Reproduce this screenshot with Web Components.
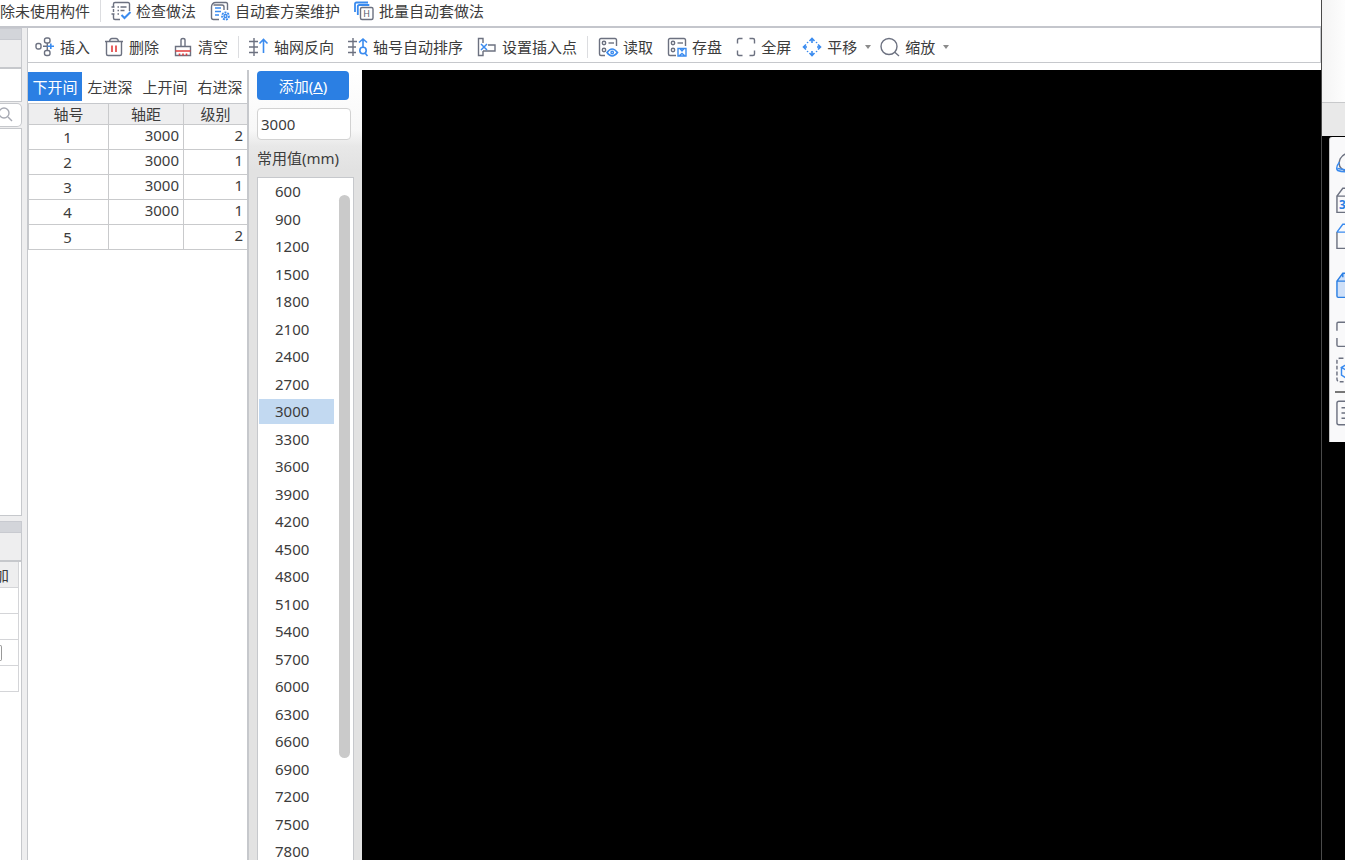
<!DOCTYPE html>
<html lang="zh-CN">
<head>
<meta charset="utf-8">
<title>轴网定义</title>
<style>
  html, body { margin: 0; height: 100%; overflow: hidden; }
  body {
    font: 15px/20px "Noto Sans", "Noto Sans CJK SC", sans-serif;
    color: #3c3c3c;
    background: #fff;
    --blue: #2b7fe3;
    --line: #c6c8cc;
    --chrome: #eeeeef;
  }
</style>
</head>
<body>
<app-shell>
  <tool-bar slot="ribbon" class="ribbon" label="构件工具">
    <tool-button>删除未使用构件</tool-button>
    <tool-separator></tool-separator>
    <tool-button icon="check">检查做法</tool-button>
    <tool-button icon="scheme">自动套方案维护</tool-button>
    <tool-button icon="batch">批量自动套做法</tool-button>
  </tool-bar>
  <side-dock slot="dock"></side-dock>
  <tool-bar slot="tools" label="轴网工具">
    <tool-button icon="insert">插入</tool-button>
    <tool-button icon="delete">删除</tool-button>
    <tool-button icon="clear">清空</tool-button>
    <tool-separator></tool-separator>
    <tool-button icon="reverse">轴网反向</tool-button>
    <tool-button icon="sort">轴号自动排序</tool-button>
    <tool-button icon="origin">设置插入点</tool-button>
    <tool-separator></tool-separator>
    <tool-button icon="read">读取</tool-button>
    <tool-button icon="save">存盘</tool-button>
    <tool-button icon="full">全屏</tool-button>
    <tool-button icon="pan" menu>平移</tool-button>
    <tool-button icon="zoom" menu>缩放</tool-button>
  </tool-bar>
  <axis-table slot="axes"></axis-table>
  <spacing-panel slot="spacing"></spacing-panel>
  <view-palette slot="palette"></view-palette>
</app-shell>

<script>
const ICONS = {
  insert: '<rect x="1" y="6.500" width="5" height="5.500" rx="2"/><rect x="9.500" y="1" width="5.500" height="5" rx="2"/><rect x="9.500" y="13.500" width="5.500" height="5" rx="2"/><path d="M8 9.300h4M12.300 6v7.500"/><path class="b" stroke-width="1.600" d="M12.500 9.300h6.500M15.800 6.500V12"/>',
  delete: '<path d="M1 4.500h18M5.500 4.500Q6 1.500 8 1.500h4q2 0 2.500 3M2.500 4.500V17q0 1.500 1.500 1.500h12q1.500 0 1.500-1.500V4.500"/><path class="r" d="M8 8.500v6.500M12 8.500v6.500"/>',
  clear: '<path d="M8 9.500V3q0-1.500 2-1.500t2 1.500v6.500M2.500 18.500V9.500h15v9z"/><path class="r" d="M2.500 14h15M6.500 16.500v2M10 16.500v2M13.500 16.500v2"/>',
  reverse: '<path d="M5 1v18M0 4.500h9M0 10h9M0 15.500h9"/><path class="b" stroke-width="1.600" d="M14.500 16V2.500M10.500 6.500l4-4 4 4"/>',
  sort: '<path d="M5 1v18M0 4.500h9M0 10h8M0 15.500h8"/><path class="b" stroke-width="1.600" d="M15 10V2M11 5.500L15 2l4 3.500"/><circle class="b" stroke-width="1.600" cx="15" cy="13.500" r="3.200"/><path class="b" stroke-width="1.600" d="M17 16l2.500 3"/>',
  origin: '<path d="M6 6V1.500H1.500v17H6V14M11 8h7v6H6"/><path class="b" stroke-width="1.500" d="M4 7l6 6M10 7l-6 6"/>',
  read: '<path d="M18.500 9V3q0-1.500-1.500-1.500H3Q1.500 1.500 1.500 3v14q0 1.500 1.500 1.500h4"/><circle cx="6" cy="6" r="1.700"/><circle cx="6" cy="13" r="1.700"/><path d="M10.500 6h5.500"/><path class="b" stroke-width="1.600" d="M9 15.500q5-7 10.500 0q-5.500 7-10.500 0z"/><circle class="b" cx="14.200" cy="15.500" r="1.200"/>',
  save: '<path d="M18.500 9V3q0-1.500-1.500-1.500H3Q1.500 1.500 1.500 3v14q0 1.500 1.500 1.500h6"/><circle cx="6" cy="6" r="1.700"/><circle cx="6" cy="13" r="1.700"/><path d="M10.500 6h5.500"/><path class="b" stroke-width="1.400" d="M11 11.500h8v7.500h-8zM13 11.500l2 2.500 2-2.500M12.500 18.500l2.500-2 2.500 2"/>',
  full: '<path d="M1.500 6.500V3q0-1.500 1.500-1.500h3.500M13.500 1.500H17q1.500 0 1.500 1.500v3.500M18.500 13.500V17q0 1.500-1.500 1.500h-3.500M6.500 18.500H3q-1.500 0-1.500-1.500v-3.500"/>',
  pan: '<path class="b" stroke-width="1.600" d="M7.500 4L10 1.500 12.500 4M7.500 16l2.500 2.500 2.500-2.500M4 7.500L1.500 10 4 12.500M16 7.500l2.500 2.500-2.500 2.500M10 2v4M10 14v4M2 10h3M15 10h3"/><path class="b" d="M5.500 5.500h.1M14.500 5.500h.1M5.500 14.500h.1M14.500 14.500h.1" stroke-linecap="round" stroke-width="1.600"/>',
  zoom: '<circle cx="9" cy="9.500" r="8"/><path d="M14.500 15L19 19"/>',
  check: '<path d="M18.500 10V3q0-1.500-1.500-1.500H4Q2.500 1.500 2.500 3v3M2.500 8v3M2.500 13v4q0 1.500 1.500 1.500h5M0.500 6h3M0.500 13h3M6.500 6h1.500M9.500 6h6M6.500 9.500h1.500M9.500 9.500h4M6.500 13h1.500"/><path class="b" stroke-width="2" d="M10.500 14l3 3 6-6"/>',
  scheme: '<path d="M17.500 9V3q0-1.500-1.500-1.500H6M3.500 4H12q2 0 2 2v3M1.500 6v10.500q0 2 2 2H9M1.500 6q0-4.500 4.500-4.500"/><path class="b" stroke-width="1.600" d="M5 7h6M5 10.500h6M5 14h4"/><circle class="b" cx="15.500" cy="15" r="3.500" stroke-dasharray="2 1" stroke-width="1.800"/><circle class="b" cx="15.500" cy="15" r="1.500"/>',
  batch: '<path class="b" stroke-width="1.800" d="M1 11V3q0-1.500 1.500-1.500H14M3.800 14V5.500Q3.800 4 5.300 4h10"/><rect x="6.500" y="6.500" width="12.500" height="12" rx="1.500"/><text x="9.200" y="15.700">H</text>',
  orbit: '<path d="M12 1Q6 2 4 6q-2 5 1 7.500l8 5.500"/><path class="b" d="M3.500 8.500Q0 13 2 15q3 1 7 1M2 13.500l6 1"/>',
  cube3: '<path d="M1.500 7v12.500h18V7zM1.500 7L6 1h14"/><text class="n" x="3" y="17">3</text>',
  cubeTop: '<path d="M1.500 7v12.500h18V7"/><path class="b" d="M1.500 7L6 1h14M1.500 7h18"/>',
  cubeFill: '<path class="f" d="M1.500 7L6 1h14v18.500H2.500q-1 0-1-1zM1.500 7h18M6 1v3"/>',
  frame: '<path d="M1.500 7.500V2q0-1 1-1h16M1.500 13v5.500q0 1 1 1h16"/>',
  select: '<rect x="1.500" y="1" width="18" height="18" rx="2" stroke-dasharray="3 1.500"/><path class="b" d="M5 8l5-3 6 3-6 3zM5 8v6l5 3V11"/>',
  doc: '<rect x="1.500" y="1" width="17" height="18" rx="1.500"/><path d="M5 6h9M5 10h9M5 14h9"/>',
  search: '<circle cx="8" cy="8" r="5"/><path d="M12 12l4 4"/>'
};

function define(name, css, html, setup) {
  const tpl = document.createElement('template');
  customElements.define(name, class extends HTMLElement {
    connectedCallback() {
      if (this.shadowRoot) return;
      tpl.innerHTML = `<style>*{box-sizing:border-box}button,input{font:inherit;color:inherit}${css}</style>${typeof html === 'function' ? html(this) : html}`;
      this.attachShadow({ mode: 'open' }).append(tpl.content.cloneNode(true));
      if (setup) setup(this.shadowRoot);
    }
  });
}

define('ui-icon', `
  :host { display: block; flex: none; width: var(--icon-size, 20px); height: var(--icon-size, 20px); }
  svg { display: block; width: 100%; height: 100%; overflow: visible; fill: none; stroke: #6c7180; stroke-width: var(--icon-stroke, 1.4); }
  .b { stroke: #3a8bef; } .r { stroke: #e23b3b; stroke-width: 1.600; }
  .f { stroke: #2b7fe3; fill: #cfe0f8; }
  text { font: 9px "Noto Sans", sans-serif; fill: #555b6b; stroke: none; }
  .n { font-weight: 700; fill: #2b7fe3; }
`, h => `<svg viewBox="0 0 20 20" aria-hidden="true">${ICONS[h.getAttribute('name')]}</svg>`);

define('tool-button', `
  :host { display: block; flex: none; }
  button { display: flex; align-items: center; gap: 5px; height: 24px; padding: 0 7px; border: 0; background: none; white-space: nowrap; }
  :host([menu]) button { padding: 0 4px; }
  .caret { width: 8px; height: 4px; margin-left: 2px; display: block; fill: #8b8b8b; }
`, h => `<button type="button">${h.hasAttribute('icon') ? `<ui-icon name="${h.getAttribute('icon')}"></ui-icon>` : ''}<slot></slot>${h.hasAttribute('menu') ? '<svg class="caret" viewBox="0 0 8 4" aria-hidden="true"><path d="M1 0h6L4 4z"/></svg>' : ''}</button>`);

define('tool-separator', `:host { display: block; flex: none; width: 1px; height: 22px; margin: 0 3px; background: #dcdde0; }`, '');

define('tool-bar', `
  :host { display: block; background: #fff; overflow: hidden; }
  div { display: flex; align-items: center; height: 35px; padding: 4px 0 0; border: 1px solid var(--line); border-left: 0; border-top: 0; }
  :host(.ribbon) div { height: 28px; padding: 0 0 4px; margin-left: -22px; border-right: 0; border-bottom: 2px solid #c4c6cc; }
`, h => `<div role="toolbar" aria-label="${h.getAttribute('label')}"><slot></slot></div>`);

define('side-dock', `
  :host { display: flex; flex-direction: column; background: var(--chrome); overflow: hidden; padding-right: 5px; border-right: 1px solid var(--line); }
  .grip { height: 12px; background: #d3d5da; border: 1px solid #c8cad0; border-left: 0; }
  .head { height: 27px; border-right: 1px solid var(--line); }
  .box { height: 35px; background: #fff; border: solid var(--line); border-width: 2px 1px 1px 0; }
  .search { display: flex; align-items: center; height: 24px; margin: 1px 0; background: #fff; border: 1px solid var(--line); border-left: 0; border-radius: 0 5px 5px 0; }
  .search ui-icon { margin-left: -4px; filter: opacity(.6); }
  .tree { height: 388px; background: #fff; border: 1px solid var(--line); border-left: 0; margin-bottom: 5px; }
  .props { flex: 1; background: #fff; border: solid var(--line); border-width: 2px 1px 0 0; padding-right: 2px; }
  table { border-collapse: separate; border-spacing: 0; width: 100%; table-layout: fixed; }
  th, td { padding: 0; height: 26px; border: solid #d4d5d8; border-width: 0 1px 1px 0; }
  th { background: var(--chrome); font-weight: 400; overflow: hidden; }
  th span { display: block; width: 15px; margin-left: -6px; }
  i { display: block; width: 2px; height: 16px; border: 1px solid #999; border-left: 0; border-radius: 0 2px 2px 0; }
`, `<div class="grip"></div><div class="head"></div><div class="box"></div>
  <div class="search"><ui-icon name="search"></ui-icon></div><div class="tree"></div>
  <div class="grip"></div><div class="head"></div>
  <div class="props"><table><thead><tr><th><span>加</span></th></tr></thead>
  <tbody><tr><td></td></tr><tr><td></td></tr><tr><td><i></i></td></tr><tr><td></td></tr></tbody></table></div>`);

const rows = [[1, 3000, 2], [2, 3000, 1], [3, 3000, 1], [4, 3000, 1], [5, '', 2]];
define('axis-table', `
  :host { display: block; background: #fff; border-right: 2px solid var(--line); padding-top: 2px; }
  nav { display: flex; gap: 1px; height: 31px; }
  nav button { width: 54px; height: 29px; padding: 0; border: 0; background: none; white-space: nowrap; }
  nav button[aria-selected=true] { background: var(--blue); color: #fff; }
  table { width: 100%; table-layout: fixed; border-collapse: separate; border-spacing: 0; border: solid var(--line); border-width: 1px 0 0 1px; }
  th, td { height: 25px; padding: 0 4px 4px; border: solid #c9cacc; border-width: 0 1px 1px 0; text-align: right; font-weight: 400; line-height: 20px; }
  th { height: 21px; padding: 0; background: var(--chrome); text-align: center; }
  tbody th { height: 25px; background: #fff; padding: 0 2px 1px 0; }
  tr > :last-child { border-right: 0; }
`, `<nav role="tablist"><button role="tab" aria-selected="true">下开间</button><button role="tab">左进深</button><button role="tab">上开间</button><button role="tab">右进深</button></nav>
  <table><colgroup><col style="width:80px"><col style="width:75px"><col></colgroup>
  <thead><tr><th>轴号</th><th>轴距</th><th>级别</th></tr></thead>
  <tbody>${rows.map(r => `<tr><th scope="row">${r[0]}</th><td>${r[1]}</td><td>${r[2]}</td></tr>`).join('')}</tbody></table>`,
  root => root.querySelectorAll('nav button').forEach(b => b.onclick = () =>
    root.querySelectorAll('nav button').forEach(o => o.setAttribute('aria-selected', o === b))));

const values = [600, 900];
for (let v = 1200; v <= 7800; v += 300) values.push(v);
define('spacing-panel', `
  :host { display: flex; flex-direction: column; min-height: 0; overflow: hidden; padding: 1px 8px 0; background: linear-gradient(#fff 0, #f8f8f8 60px, #e8e8e8 76px, #e2e2e2 100px); }
  .add { flex: none; height: 29px; margin-right: 5px; padding: 0; border: 0; border-radius: 4px; background: var(--blue); color: #fff; }
  input { flex: none; width: auto; min-width: 0; height: 32px; margin: 8px 3px 8px 0; padding: 0 3px; border: 1px solid #d2d2d2; border-radius: 4px; background: #fff; }
  label { flex: none; height: 29px; line-height: 21px; white-space: nowrap; }
  .list { flex: 1; min-height: 0; display: flex; justify-content: space-between; overflow: hidden; background: #fff; border: 1px solid var(--line); border-bottom: 0; }
  ul { margin: 0; padding: 0 0 0 1px; list-style: none; width: 76px; }
  li { height: 28px; padding: 1px 0; }
  li:nth-child(even) { height: 27px; }
  li span { display: block; height: 25px; line-height: 25px; padding-left: 16px; }
  li[aria-selected=true] span { background: #c2d9f1; }
  .thumb { width: 11px; height: 563px; margin: 17px 3px 0 0; border-radius: 6px; background: #cacaca; }
`, `<button class="add" type="button">添加(<u>A</u>)</button>
  <input id="v" value="3000"><label for="v">常用值(mm)</label>
  <div class="list"><ul role="listbox" aria-label="常用值">${values.map(v => `<li role="option" aria-selected="${v === 3000}"><span>${v}</span></li>`).join('')}</ul><div class="thumb"></div></div>`,
  root => root.querySelectorAll('li').forEach(li => li.onclick = () => {
    root.querySelectorAll('li').forEach(o => o.setAttribute('aria-selected', o === li));
    root.querySelector('input').value = li.textContent;
  }));

const tool = (n, t) => `<button type="button" aria-label="${t}"><ui-icon name="${n}"></ui-icon></button>`;
define('view-palette', `
  :host { display: flex; flex-direction: column; overflow: hidden; background: #000; border-left: 1px solid #4a4a4a; --icon-size: 26px; --icon-stroke: 1.1; }
  .blank { height: 103px; margin-left: -1px; background: linear-gradient(90deg, #f4f4f4, #fdfdfd); border: solid #c8c9cb; border-width: 0 0 1px 1px; }
  .band { height: 33px; margin-left: -1px; background: #e9e9e9; border-left: 1px solid #c8c9cb; }
  .tools { margin: 1px 0 0 7px; padding: 9px 0 11px; background: #f9f9fa; border-left: 1px solid #c5c5c5; border-radius: 3px 0 0 0; overflow: hidden; }
  .group { display: flex; flex-direction: column; margin-bottom: 13px; }
  .group:last-child { margin: 0 0 0 5px; padding-top: 2px; border-top: 2px solid #777; }
  .group:nth-last-child(2) { margin-bottom: 3px; }
  button { display: flex; align-items: center; height: 36px; width: 36px; padding: 0 0 0 5px; border: 0; background: none; }
  .group:last-child button { padding-left: 0; }
`, `<div class="blank"></div><div class="band"></div><div class="tools" role="toolbar" aria-label="视图">
  <div class="group">${tool('orbit', '动态观察')}${tool('cube3', '三维')}${tool('cubeTop', '俯视')}</div>
  <div class="group">${tool('cubeFill', '实体')}</div>
  <div class="group">${tool('frame', '全图')}${tool('select', '选择')}</div>
  <div class="group">${tool('doc', '显示设置')}</div></div>`);

define('app-shell', `
  :host { display: grid; grid-template-columns: minmax(0, 1fr) 24px; height: 100vh; }
  .main { display: grid; grid-template: auto minmax(0, 1fr) / 28px minmax(0, 1fr); min-height: 0; }
  .ribbon { grid-column: 1 / 3; }
  .dock { display: grid; min-height: 0; }
  .work { display: flex; flex-direction: column; min-width: 0; min-height: 0; }
  .body { flex: 1; min-height: 0; margin-top: 7px; display: grid; grid-template: minmax(0, 1fr) / 221px 113px minmax(0, 1fr); }
  .canvas { background: #000; }
  .palette { display: grid; min-height: 0; }
`, `<div class="main"><div class="ribbon"><slot name="ribbon"></slot></div><div class="dock"><slot name="dock"></slot></div>
  <div class="work"><slot name="tools"></slot><div class="body"><slot name="axes"></slot><slot name="spacing"></slot><main class="canvas"></main></div></div></div>
  <div class="palette"><slot name="palette"></slot></div>`);
</script>
</body>
</html>
